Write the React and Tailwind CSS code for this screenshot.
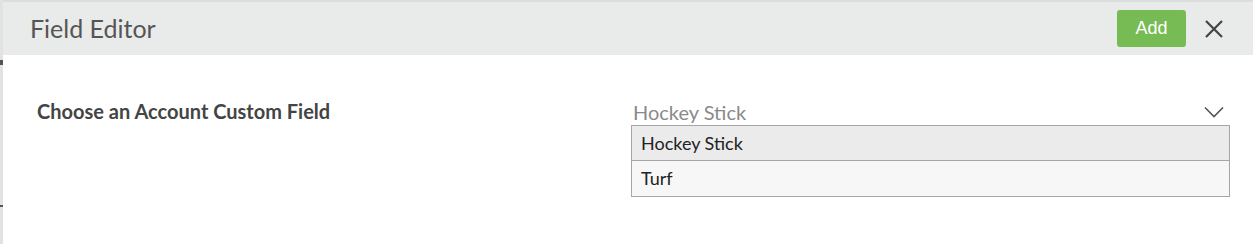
import React from 'react';

const options = ['Hockey Stick', 'Turf'];

const FieldEditor = () => {
  return (
    <div className="flex h-[244px] w-full bg-white" style={{ fontFamily: 'Lato, "Open Sans", sans-serif' }}>
      <div className="flex w-[3px] flex-col bg-[#e2e2e2]">
        <div className="h-[60px]"></div>
        <div className="h-[5px] bg-[#555]"></div>
        <div className="h-[140px]"></div>
        <div className="h-[2px] bg-[#555]"></div>
      </div>
      <div className="flex flex-1 flex-col">
        <div className="flex h-[55px] items-center border-t-2 border-[#dcdddd] bg-[#e9eaea] pl-[27px] pr-[29px]">
          <h1 className="flex-1 text-[25px] text-[#555] leading-none">Field Editor</h1>
          <button
            className="h-[37px] w-[69px] rounded-[3px] bg-[#77bb55] text-[18px] text-white"
            style={{ fontFamily: '"Liberation Sans", Arial, sans-serif' }}
          >
            Add
          </button>
          <svg className="ml-[18px] h-[20px] w-[20px]" viewBox="0 0 20 20" fill="none" stroke="#444" strokeWidth="2.2">
            <path d="M2 2L18 18M18 2L2 18" />
          </svg>
        </div>
        <div className="flex pl-[34px] pr-[23px] pt-[44px]">
          <div className="w-[594px] text-[20px] leading-[24px] font-bold text-[#444]">Choose an Account Custom Field</div>
          <div className="flex-1">
            <div className="flex h-[26px] items-center pl-[2px] pr-[6px]">
              <span className="flex-1 text-[20px] text-[#8a8a8a]">Hockey Stick</span>
              <svg className="h-[12px] w-[20px]" viewBox="0 0 20 12" fill="none" stroke="#555" strokeWidth="1.6">
                <path d="M1 1.5L10 10.5L19 1.5" />
              </svg>
            </div>
            <ul className="border border-[#a6a6a6]">
              {options.map((opt, i) => (
                <li
                  key={opt}
                  className={`flex h-[35px] items-center pl-[9px] text-[18px] text-[#222] ${
                    i === 0 ? 'bg-[#ebebeb] border-b border-[#a6a6a6]' : 'bg-[#f7f7f7]'
                  }`}
                >
                  {opt}
                </li>
              ))}
            </ul>
          </div>
        </div>
      </div>
    </div>
  );
};

export default function App() {
  return <FieldEditor />;
}
